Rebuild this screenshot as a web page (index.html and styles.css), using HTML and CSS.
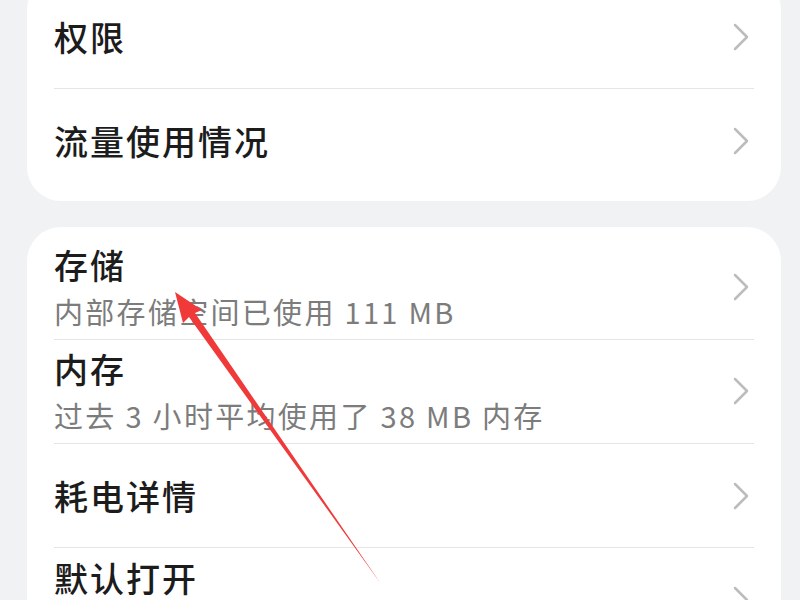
FILE: index.html
```html
<!DOCTYPE html>
<html lang="zh-CN">
<head>
    <meta charset="UTF-8">
    <meta name="viewport" content="width=device-width, initial-scale=1.0">
    <title>应用信息</title>
    <link rel="stylesheet" href="styles.css">
</head>
<body>
    <div class="page">
        <!-- Permissions and data usage -->
        <div class="card card-first">
            <div class="list-item">
                <div class="item-text">
                    <div class="item-title">权限</div>
                </div>
                <svg class="chevron" viewBox="0 0 16 28"><path d="M2 2 L14 14 L2 26"/></svg>
            </div>
            <div class="list-item">
                <div class="item-text">
                    <div class="item-title">流量使用情况</div>
                </div>
                <svg class="chevron" viewBox="0 0 16 28"><path d="M2 2 L14 14 L2 26"/></svg>
            </div>
        </div>

        <!-- Storage, memory, battery -->
        <div class="card">
            <div class="list-item has-summary">
                <div class="item-text">
                    <div class="item-title">存储</div>
                    <div class="item-summary">内部存储空间已使用 111 MB</div>
                </div>
                <svg class="chevron" viewBox="0 0 16 28"><path d="M2 2 L14 14 L2 26"/></svg>
            </div>
            <div class="list-item has-summary">
                <div class="item-text">
                    <div class="item-title">内存</div>
                    <div class="item-summary">过去 3 小时平均使用了 38 MB 内存</div>
                </div>
                <svg class="chevron" viewBox="0 0 16 28"><path d="M2 2 L14 14 L2 26"/></svg>
            </div>
            <div class="list-item">
                <div class="item-text">
                    <div class="item-title">耗电详情</div>
                </div>
                <svg class="chevron" viewBox="0 0 16 28"><path d="M2 2 L14 14 L2 26"/></svg>
            </div>
            <div class="list-item has-summary">
                <div class="item-text">
                    <div class="item-title">默认打开</div>
                    <div class="item-summary">未设置默认操作</div>
                </div>
                <svg class="chevron" viewBox="0 0 16 28"><path d="M2 2 L14 14 L2 26"/></svg>
            </div>
        </div>
    </div>

    <!-- Red annotation arrow drawn over the screenshot -->
    <svg class="annotation" viewBox="0 0 800 600">
        <polygon points="175,292 202,310 195,313 381,584 189,317 183,323"/>
    </svg>
</body>
</html>
```

FILE: styles.css
```css
* {
    margin: 0;
    padding: 0;
    box-sizing: border-box;
}

body {
    overflow: hidden;
    background-color: #f1f2f4;
    font-family: "Noto Sans CJK SC", "Noto Sans", sans-serif;
}

.page {
    display: flex;
    flex-direction: column;
    gap: 26px;
    padding: 0 19px 0 27px;
}

.card {
    background-color: #fff;
    border-radius: 34px;
    padding: 9px 27px 8px 27px;
}

.card-first {
    margin-top: -24px;
}

.list-item {
    display: flex;
    align-items: center;
    min-height: 104px;
    border-bottom: 1px solid #e6e6e6;
}

.list-item:last-child {
    border-bottom: none;
}

.list-item.has-summary {
    padding: 7px 0 8px 0;
}

.item-text {
    flex: 1;
}

.item-title {
    font-size: 34px;
    font-weight: 500;
    line-height: 44px;
    letter-spacing: 2px;
    color: #1c1c1c;
}

.item-summary {
    margin-top: 4px;
    font-size: 29px;
    line-height: 40px;
    letter-spacing: 2.3px;
    color: #7c7c7c;
}

.chevron {
    width: 16px;
    height: 28px;
    margin-right: 5px;
    fill: none;
    stroke: #bcbcbc;
    stroke-width: 2.5;
    stroke-linecap: round;
    stroke-linejoin: round;
}

.annotation {
    position: absolute;
    top: 0;
    left: 0;
    width: 800px;
    height: 600px;
    pointer-events: none;
}

.annotation polygon {
    fill: #f03a3a;
}
```
